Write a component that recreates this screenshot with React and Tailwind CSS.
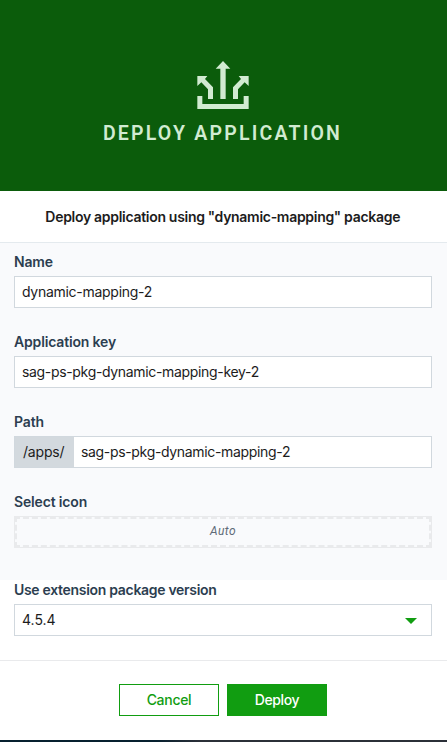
import React from "react";

function DeployIcon() {
  return (
    <svg viewBox="0 0 198 180" className="mr-px h-[60px] w-[66px]" fill="#d1ebd1" aria-hidden="true">
      <path d="M99 18 L121 41 H107 V132 H91 V41 H77 Z" />
      <path d="M22 63 H52 L45 72 L69 97 V132 H54 V103 L34 82 L22 93 Z" />
      <path d="M176 63 H146 L153 72 L129 97 V132 H144 V103 L164 82 L176 93 Z" />
      <path d="M22 123 H37 V147 H161 V123 H176 V162 H22 Z" />
    </svg>
  );
}

function Label({ children, className }) {
  return (
    <div className={"h-6 text-sm leading-6 font-semibold text-[#2c3e50] " + className}>
      <span>{children}</span>
    </div>
  );
}

function Field({ label, labelClass, value, valueClass, prefix }) {
  return (
    <div className="h-20 pt-[7px]">
      <Label className={labelClass}>{label}</Label>
      <div className="mt-[2px] flex h-8 border border-[#d1d8de] bg-white text-sm leading-[30px] text-[#1c1c1c]">
        {prefix && (
          <div className="w-[59px] bg-[#d3d9de] pl-2">
            <span className="tracking-[-0.2px]">{prefix}</span>
          </div>
        )}
        <div className="pl-[7px]">
          <span className={valueClass}>{value}</span>
        </div>
      </div>
    </div>
  );
}

export default function App() {
  return (
    <div className="flex h-[742px] w-[447px] flex-col overflow-hidden bg-white font-['Inter',sans-serif]">
      <header className="flex h-[191px] flex-col items-center bg-[#0b5c0b] pt-[55px] pr-px text-[#d1ebd1]">
        <DeployIcon />
        <h1 className="mt-[5px] pr-px font-['Roboto',sans-serif] text-[19.5px] leading-7 font-semibold tracking-[2.2px]">
          DEPLOY APPLICATION
        </h1>
      </header>

      <div className="h-[52px] border-b border-[#e4eaee] pr-[1.5px] text-center text-sm leading-[52px] font-semibold text-[#1c1c1c]">
        <span className="tracking-[-0.3px]">Deploy application using "dynamic-mapping" package</span>
      </div>

      <main className="h-[337px] bg-[#f9fafc] pr-[15px] pl-[14px]">
        <Field label="Name" labelClass="tracking-[-0.2px]" value="dynamic-mapping-2" valueClass="tracking-[-0.28px]" />
        <Field label="Application key" labelClass="tracking-[-0.16px]" value="sag-ps-pkg-dynamic-mapping-key-2" valueClass="tracking-[-0.33px]" />
        <Field label="Path" labelClass="tracking-[-0.14px]" value="sag-ps-pkg-dynamic-mapping-2" valueClass="tracking-[-0.33px]" prefix="/apps/" />
        <div className="pt-[7px]">
          <Label className="tracking-[-0.16px]">Select icon</Label>
          <div className="mt-[2px] h-8 border border-[#e9eaec]">
            <div className="-m-px h-8 border-[3px] border-dashed border-[#e9eaec] text-center font-['Roboto',sans-serif] text-xs leading-[24px] text-[#5f6b78] italic">
              <span className="tracking-[0.4px]">Auto</span>
            </div>
          </div>
        </div>
      </main>

      <section className="h-20 pr-[15px] pl-[14px]">
        <Label className="-mt-[2px] tracking-[-0.31px]">Use extension package version</Label>
        <div className="mt-[2px] flex h-8 items-center justify-between border border-[#d1d8de] pr-[14px] pl-[7px] text-sm text-[#1c1c1c]">
          <span>4.5.4</span>
          <svg width="12" height="6" viewBox="0 0 12 6" className="mt-px" fill="#119d11" aria-hidden="true">
            <path d="M0 0 H12 L6 6 Z" />
          </svg>
        </div>
      </section>

      <footer className="flex h-20 justify-center gap-2 border-t border-[#e9eaec] pt-[23px] pr-px text-sm font-medium">
        <button className="h-8 w-[100px] border border-[#119d11] text-[#119d11]">
          <span className="tracking-[-0.3px]">Cancel</span>
        </button>
        <button className="h-8 w-[100px] bg-[#119d11] text-white">
          <span className="tracking-[-0.4px]">Deploy</span>
        </button>
      </footer>
      <div className="h-[2px] bg-linear-to-r from-[#06202f] from-35% to-[#2b3038] to-45%" />
    </div>
  );
}
